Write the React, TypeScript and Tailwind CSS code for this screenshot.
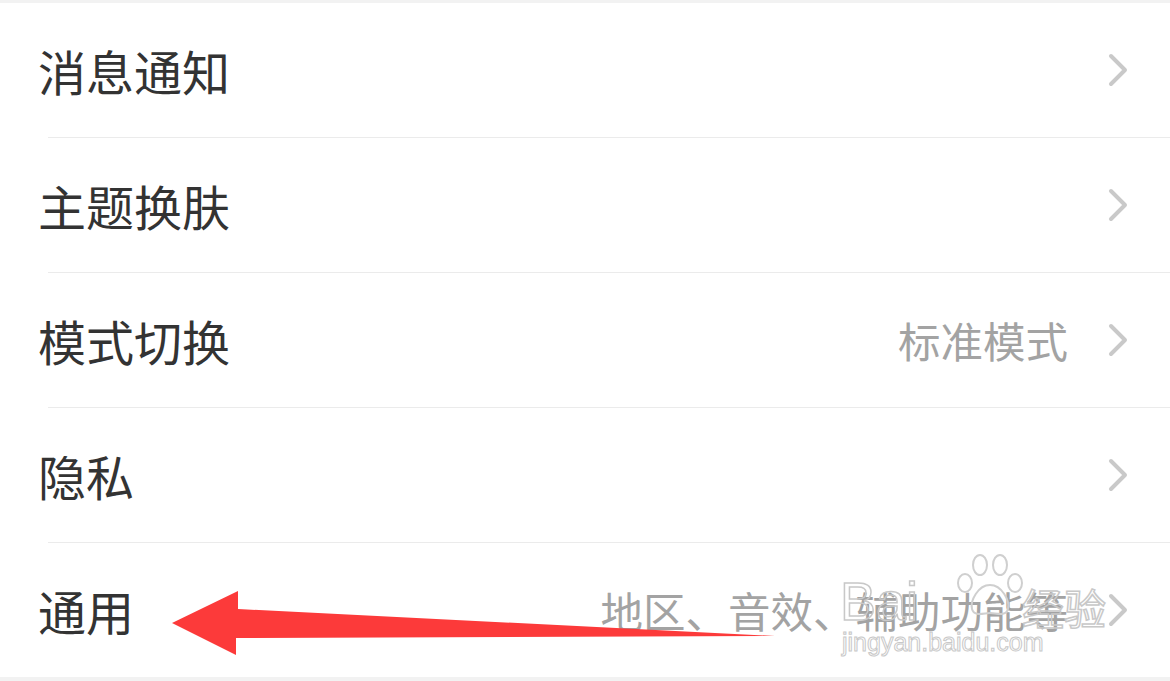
import React from "react";

const items = [
  { label: "消息通知", value: "" },
  { label: "主题换肤", value: "" },
  { label: "模式切换", value: "标准模式" },
  { label: "隐私", value: "" },
  { label: "通用", value: "地区、音效、辅助功能等" },
];

const Chevron = () => (
  <svg width="22" height="34" viewBox="0 0 22 34" className="shrink-0">
    <polyline
      points="3,3 17,17 3,31"
      fill="none"
      stroke="#c9c9c9"
      strokeWidth="4"
      strokeLinecap="round"
      strokeLinejoin="round"
    />
  </svg>
);

// jingyan watermark sitting over the last row
const Watermark = () => (
  <div className="absolute left-[840px] top-[552px] w-[270px] h-[110px] pointer-events-none flex flex-col">
    <div className="relative h-[78px]">
      <svg width="80" height="66" viewBox="0 0 80 66" className="absolute left-[110px] top-0">
        <g fill="none" stroke="#cfcfcf" strokeWidth="2">
          <ellipse cx="30" cy="13" rx="7" ry="10" />
          <ellipse cx="50" cy="13" rx="7" ry="10" />
          <ellipse cx="15" cy="31" rx="7" ry="9" />
          <ellipse cx="65" cy="31" rx="7" ry="9" />
          <path d="M40 33 C28 33 20 49 22 57 C24 65 34 61 40 61 C46 61 56 65 58 57 C60 49 52 33 40 33 Z" />
        </g>
      </svg>
      <div className="absolute left-0 bottom-[2px] w-full flex items-end justify-between pr-[4px]">
        <span
          className="text-[54px] leading-none text-transparent [-webkit-text-stroke:1.5px_#c8c8c8]"
          style={{ fontFamily: '"Liberation Sans", Arial, sans-serif' }}
        >
          Bai
        </span>
        <span
          className="text-[42px] leading-none text-transparent [-webkit-text-stroke:1.5px_#c8c8c8]"
          style={{ fontFamily: '"Noto Sans CJK SC", sans-serif' }}
        >
          经验
        </span>
      </div>
    </div>
    <span
      className="text-[25px] leading-none text-transparent [-webkit-text-stroke:1px_#c8c8c8] pl-[2px]"
      style={{ fontFamily: '"Liberation Sans", Arial, sans-serif' }}
    >
      jingyan.baidu.com
    </span>
  </div>
);

export default function App() {
  return (
    <div
      className="relative w-[1170px] h-[681px] bg-[#f2f2f2] overflow-hidden"
      style={{ fontFamily: '"Noto Sans CJK SC", "Noto Sans", sans-serif' }}
    >
      <div className="mt-[3px] bg-white">
        {items.map((item, i) => (
          <div key={item.label}>
            <div className="h-[134px] flex items-center pl-[38px] pr-[40px]">
              <span className="text-[48px] text-[#333333] leading-none flex-1">{item.label}</span>
              {item.value && (
                <span className="text-[42.5px] text-[#a3a3a3] leading-none mr-[40px]">{item.value}</span>
              )}
              <Chevron />
            </div>
            {i < items.length - 1 && <div className="ml-[48px] h-px bg-[#ebebeb]" />}
          </div>
        ))}
      </div>

      <Watermark />

      {/* red arrow */}
      <svg
        width="1170"
        height="681"
        viewBox="0 0 1170 681"
        className="absolute left-0 top-0 pointer-events-none"
      >
        <polygon
          points="172,623 238,591 238,609 775,636 236,638 236,655"
          fill="#fc3a3a"
        />
      </svg>
    </div>
  );
}
